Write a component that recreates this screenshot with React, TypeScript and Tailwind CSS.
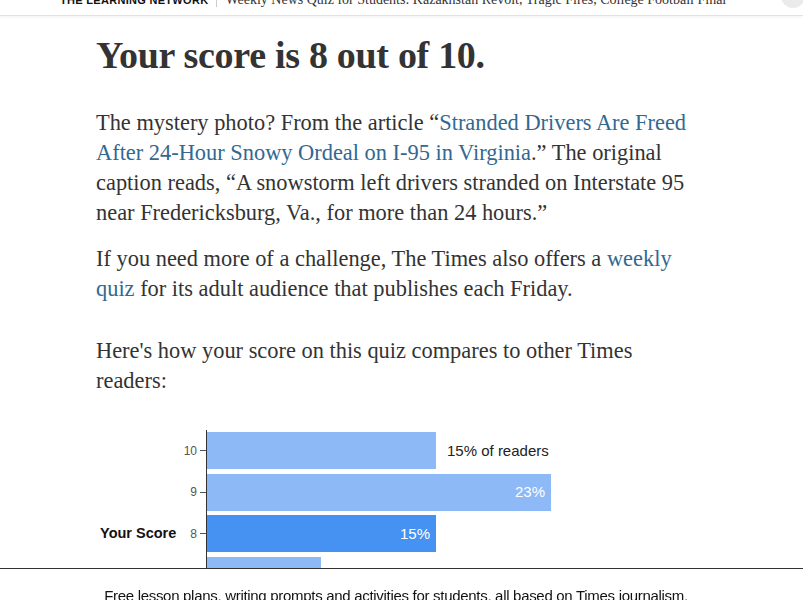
const bars = [
  { score: '10', width: 229, pct: '15%', outside: true },
  { score: '9', width: 344, pct: '23%' },
  { score: '8', width: 229, pct: '15%', mine: true },
  { score: '7', width: 114, pct: '8%' },
]

export default function App() {
  return (
    <div className="min-h-screen bg-white text-[#333]">
      {/* Top bar, scrolled so its text is half hidden */}
      <header className="h-[16px] overflow-hidden border-b border-[#e2e2e2] shadow-[0_1px_3px_rgba(0,0,0,0.06)] flex items-end justify-between pl-[60px]">
        <div className="flex items-center gap-[8px] -mb-[1px] h-[20px] pb-[12px] leading-none">
          <span className="font-['Liberation_Sans',sans-serif] font-bold text-[11px] tracking-[0.3px] text-[#121212]">
            THE LEARNING NETWORK
          </span>
          <span className="w-px h-[14px] bg-[#ccc]" />
          <span className="font-['Liberation_Serif',serif] text-[14px] text-[#333]">
            Weekly News Quiz for Students: Kazakhstan Revolt, Tragic Fires, College Football Final
          </span>
        </div>
        <div className="w-[24px] h-[24px] rounded-full bg-[#ebebeb] mr-[-2px] mt-[-16px] self-start" />
      </header>

      <main className="pl-[96px] pr-[107px] pt-[16px] pb-[80px]">
        <h1 className="font-['Liberation_Serif',serif] font-bold text-[38px] leading-[46px] tracking-[-0.3px] text-[#333]">
          Your score is 8 out of 10.
        </h1>

        <div className="mt-[30px] font-['Liberation_Serif',serif] text-[22.4px] leading-[30px] text-[#333]">
          <p>
            The mystery photo? From the article “
            <a className="text-[#326891]">Stranded Drivers Are Freed After 24-Hour Snowy Ordeal on I-95 in Virginia</a>
            .” The original caption reads, “A snowstorm left drivers stranded on Interstate 95 near Fredericksburg, Va., for more than 24 hours.”
          </p>
          <p className="mt-[16px]">
            If you need more of a challenge, The Times also offers a{' '}
            <a className="text-[#326891]">weekly quiz</a> for its adult audience that publishes each Friday.
          </p>
          <p className="mt-[32px]">Here's how your score on this quiz compares to other Times readers:</p>
        </div>

        {/* Chart */}
        <div className="mt-[34px] flex font-['Liberation_Sans',sans-serif]">
          <div className="w-[110px] flex flex-col">
            {bars.map((b) => (
              <div key={b.score} className="h-[41.5px] flex items-center justify-end">
                {b.mine && (
                  <span className="mr-[14px] text-[14.5px] font-bold text-[#121212]">Your Score</span>
                )}
                <span className="text-[12px] text-[#555] mr-[3px]">{b.score}</span>
                <span className="w-[6px] h-px bg-[#555]" />
              </div>
            ))}
          </div>
          <div className="border-l border-[#333] flex flex-col">
            {bars.map((b) => (
              <div key={b.score} className="h-[41.5px] flex items-center">
                <div
                  className={`h-[37px] flex items-center justify-end pr-[6px] text-[15px] text-white ${
                    b.mine ? 'bg-[#4592f2]' : 'bg-[#8db9f6]'
                  }`}
                  style={{ width: b.width }}
                >
                  {!b.outside && b.pct}
                </div>
                {b.outside && <span className="ml-[11px] text-[15px] text-[#222]">{b.pct} of readers</span>}
              </div>
            ))}
          </div>
        </div>
      </main>

      <footer className="fixed bottom-0 left-0 right-0 h-[32px] bg-white border-t border-[#333] flex justify-center pr-[11px]">
        <p className="mt-[16px] font-['Liberation_Sans',sans-serif] text-[15px] tracking-[-0.3px] text-[#121212] whitespace-nowrap">
          Free lesson plans, writing prompts and activities for students, all based on Times journalism.
        </p>
      </footer>
    </div>
  )
}
